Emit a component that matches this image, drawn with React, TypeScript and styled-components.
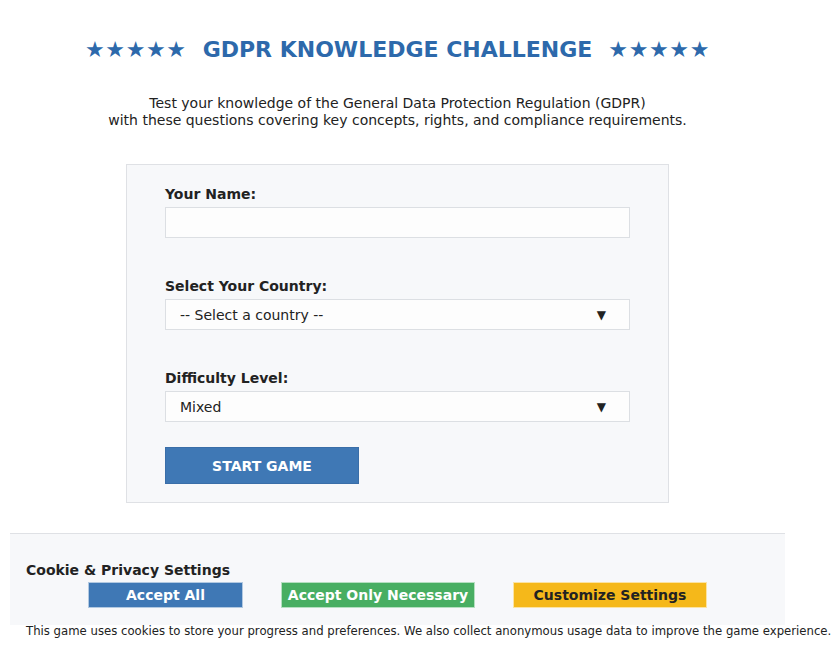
import React from "react";
import styled, { createGlobalStyle } from "styled-components";

const Global = createGlobalStyle`
  html, body { margin: 0; padding: 0; background: #ffffff; }
  body { font-family: "DejaVu Sans", Verdana, sans-serif; color: #222; overflow: hidden; }
  * { box-sizing: border-box; }
`;

const Page = styled.div`
  width: 795px;
  display: flex;
  flex-direction: column;
  align-items: center;
`;

const Title = styled.h1`
  margin: 37px 0 0;
  font-size: 22px;
  line-height: 26px;
  font-weight: bold;
  color: #2d69ab;
  display: flex;
  align-items: center;
  white-space: nowrap;
`;

const Stars = styled.span<{ $side: "left" | "right" }>`
  font-size: 22px;
  letter-spacing: 0.6px;
  ${(p) => (p.$side === "left" ? "margin-right: 16px;" : "margin-left: 16px;")}
`;

const Subtitle = styled.p`
  margin: 32px 0 0;
  font-size: 14px;
  line-height: 17px;
  text-align: center;
  color: #222;
`;

const Card = styled.div`
  margin-top: 35px;
  width: 543px;
  background: #f7f8fa;
  border: 1px solid #dfe1e5;
  padding: 21px 38px 18px;
  display: flex;
  flex-direction: column;
`;

const Field = styled.div`
  display: flex;
  flex-direction: column;
  margin-bottom: 40px;
  &:last-of-type { margin-bottom: 25px; }
`;

const Label = styled.label`
  font-size: 14px;
  font-weight: bold;
  line-height: 17px;
  margin-bottom: 4px;
  color: #222;
`;

const TextInput = styled.div`
  height: 31px;
  background: #fdfdfd;
  border: 1px solid #dcdfe3;
`;

const SelectBox = styled.div`
  height: 31px;
  background: #fdfdfd;
  border: 1px solid #dcdfe3;
  display: flex;
  align-items: center;
  justify-content: space-between;
  padding: 0 23px 0 14px;
  font-size: 14px;
  color: #222;
`;

const Arrow = styled.span`
  font-size: 12px;
  color: #222;
`;

const StartButton = styled.button`
  width: 194px;
  height: 37px;
  background: #3f78b5;
  border: 1px solid #3a6ea8;
  color: #fff;
  font-family: "DejaVu Sans", sans-serif;
  font-weight: bold;
  font-size: 14px;
  padding: 0;
`;

const Banner = styled.div`
  margin-top: 30px;
  width: 775px;
  height: 92px;
  background: #f7f8fa;
  border-top: 1px solid #dfe1e5;
  padding: 28px 16px 0;
  display: flex;
  flex-direction: column;
`;

const BannerTitle = styled.div`
  font-size: 14px;
  font-weight: bold;
  line-height: 17px;
  color: #222;
  margin-bottom: 3px;
`;

const ButtonRow = styled.div`
  display: flex;
  justify-content: center;
  gap: 38px;
`;

const BannerButton = styled.button<{ $bg: string; $fg: string; $w: number }>`
  width: ${(p) => p.$w}px;
  height: 26px;
  background: ${(p) => p.$bg};
  color: ${(p) => p.$fg};
  border: 1px solid rgba(255,255,255,0.6);
  font-family: "DejaVu Sans", sans-serif;
  font-weight: bold;
  font-size: 14px;
  padding: 0;
`;

const Notice = styled.p`
  margin: 0;
  align-self: flex-start;
  padding-left: 26px;
  margin-top: -1px;
  font-size: 11.7px;
  line-height: 14px;
  white-space: nowrap;
  color: #222;
`;

export default function App() {
  return (
    <>
      <Global />
      <Page>
        <Title>
          <Stars $side="left">★★★★★</Stars>
          GDPR KNOWLEDGE CHALLENGE
          <Stars $side="right">★★★★★</Stars>
        </Title>
        <Subtitle>
          Test your knowledge of the General Data Protection Regulation (GDPR)
          <br />
          with these questions covering key concepts, rights, and compliance requirements.
        </Subtitle>
        <Card>
          <Field>
            <Label>Your Name:</Label>
            <TextInput />
          </Field>
          <Field>
            <Label>Select Your Country:</Label>
            <SelectBox>
              <span>-- Select a country --</span>
              <Arrow>▼</Arrow>
            </SelectBox>
          </Field>
          <Field>
            <Label>Difficulty Level:</Label>
            <SelectBox>
              <span>Mixed</span>
              <Arrow>▼</Arrow>
            </SelectBox>
          </Field>
          <StartButton>START GAME</StartButton>
        </Card>
        <Banner>
          <BannerTitle>Cookie &amp; Privacy Settings</BannerTitle>
          <ButtonRow>
            <BannerButton $bg="#3f78b5" $fg="#fff" $w={155}>Accept All</BannerButton>
            <BannerButton $bg="#48ae62" $fg="#fff" $w={194}>Accept Only Necessary</BannerButton>
            <BannerButton $bg="#f5b81a" $fg="#222" $w={194}>Customize Settings</BannerButton>
          </ButtonRow>
        </Banner>
        <Notice>
          This game uses cookies to store your progress and preferences. We also collect anonymous usage data to improve the game experience.
        </Notice>
      </Page>
    </>
  );
}
